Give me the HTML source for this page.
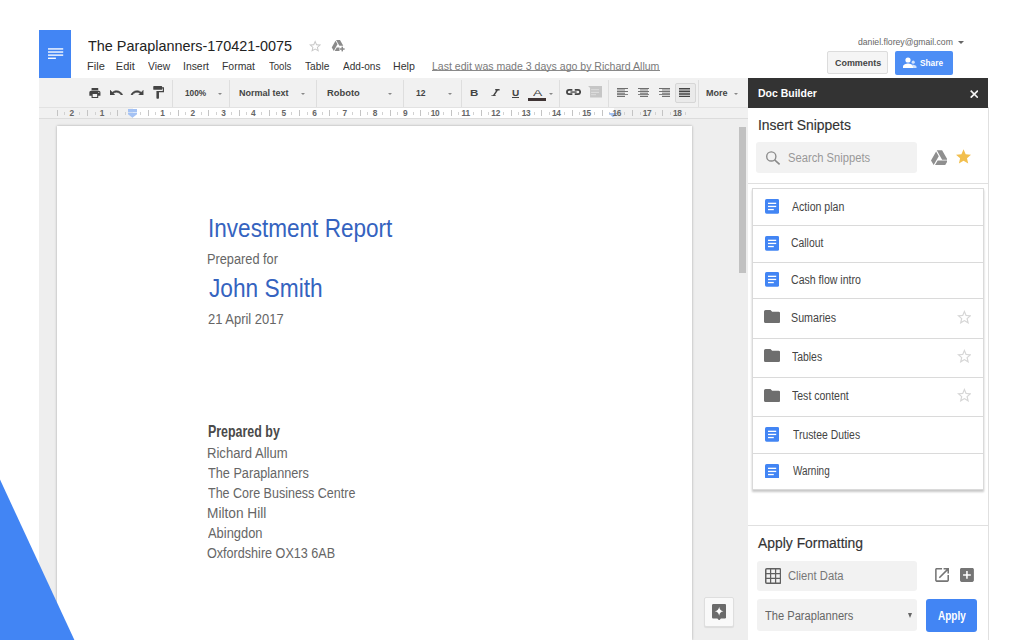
<!DOCTYPE html>
<html><head><meta charset="utf-8">
<style>
*{margin:0;padding:0;box-sizing:border-box}
html,body{width:1024px;height:640px;overflow:hidden;background:#fff;font-family:"Liberation Sans",sans-serif}
body{position:relative}
.a{position:absolute;display:block}
.t{position:absolute;white-space:nowrap;line-height:normal;transform-origin:0 0}
</style></head><body>

<div class="a" style="left:39px;top:30px;width:32px;height:48px;background:#4285f4"></div>
<svg class="a" style="left:39px;top:30px;" width="32" height="48" viewBox="0 0 32 48"><rect x="9" y="18.25" width="15.2" height="1.35" fill="#fff"/><rect x="9" y="21.35" width="15.2" height="1.35" fill="#fff"/><rect x="9" y="24.45" width="15.2" height="1.35" fill="#fff"/><rect x="9" y="27.6" width="7.9" height="1.35" fill="#fff"/></svg>
<svg class="a" style="left:309px;top:40px;" width="12.3" height="12" viewBox="2 2 20 19"><path d="M22 9.24l-7.19-.62L12 2 9.19 8.63 2 9.24l5.46 4.73L5.82 21 12 17.27 18.18 21l-1.63-7.03L22 9.24zM12 15.4l-3.76 2.27 1-4.28-3.32-2.88 4.38-.38L12 6.1l1.71 4.04 4.38.38-3.32 2.88 1 4.28L12 15.4z" fill="#c8c8c8"/></svg>
<svg class="a" style="left:331px;top:40px;" width="14" height="11.5" viewBox="0 0 24 20"><path d="M7.71,1.5L1.15,13L4.58,19L11.13,7.5Z" fill="#8a8a8a"/><path d="M8.58,0H15.42L21.2,10.2H14.4Z" fill="#8a8a8a"/><path d="M9.73,13L6.3,19H14.6V13Z" fill="#8a8a8a"/><rect x="18.1" y="11.6" width="2.6" height="8.2" fill="#8a8a8a"/><rect x="15.3" y="14.4" width="8.2" height="2.6" fill="#8a8a8a"/></svg>
<div class="a" style="left:432px;top:69.6px;width:227.5px;height:1px;background:#8a8a8a"></div>
<div class="a" style="left:957.5px;top:41px;width:0;height:0;border-left:3px solid transparent;border-right:3px solid transparent;border-top:3px solid #666"></div>
<div class="a" style="left:827px;top:51px;width:61px;height:23px;background:#f5f5f5;border:1px solid #dcdcdc;border-radius:2px"></div>
<div class="a" style="left:895px;top:51px;width:58px;height:23.5px;background:#4d8ef5;border-radius:2px"></div>
<svg class="a" style="left:902.5px;top:56.5px;" width="14" height="11" viewBox="0 0 14 11"><circle cx="5" cy="3" r="2.6" fill="#fff"/><path d="M0 11v-1.6C0 7.5 3.2 6.4 5 6.4s5 1.1 5 3V11z" fill="#fff"/><circle cx="10.2" cy="5.2" r="1.6" fill="#fff" opacity=".75"/><path d="M10 11v-1.6c0-.9-.4-1.5-1-2 1.9.1 4.5.9 4.5 2.3V11z" fill="#fff" opacity=".75"/></svg>
<div class="a" style="left:39px;top:78px;width:709px;height:29px;background:#f1f1f1"></div>
<div class="a" style="left:39px;top:107px;width:709px;height:1px;background:#e2e2e2"></div>
<div class="a" style="left:172px;top:80px;width:1px;height:27px;background:#dedede"></div>
<div class="a" style="left:229px;top:80px;width:1px;height:27px;background:#dedede"></div>
<div class="a" style="left:316px;top:80px;width:1px;height:27px;background:#dedede"></div>
<div class="a" style="left:403px;top:80px;width:1px;height:27px;background:#dedede"></div>
<div class="a" style="left:460.5px;top:80px;width:1px;height:27px;background:#dedede"></div>
<div class="a" style="left:559px;top:80px;width:1px;height:27px;background:#dedede"></div>
<div class="a" style="left:608px;top:80px;width:1px;height:27px;background:#dedede"></div>
<div class="a" style="left:698px;top:80px;width:1px;height:27px;background:#dedede"></div>
<svg class="a" style="left:89.3px;top:87.7px;" width="11.8" height="10" viewBox="2 3 20 18"><path d="M19 8H5c-1.66 0-3 1.34-3 3v6h4v4h12v-4h4v-6c0-1.66-1.34-3-3-3zm-3 11H8v-5h8v5zm3-7c-.55 0-1-.45-1-1s.45-1 1-1 1 .45 1 1-.45 1-1 1zm-1-9H6v4h12V3z" fill="#444"/></svg>
<svg class="a" style="left:110.2px;top:89.5px;" width="12.5" height="5.8" viewBox="2 7 20.1 9"><path d="M12.5 8c-2.65 0-5.05.99-6.9 2.6L2 7v9h9l-3.62-3.62c1.39-1.16 3.16-1.88 5.12-1.88 3.54 0 6.55 2.31 7.6 5.5l2.37-.78C21.08 11.03 17.15 8 12.5 8z" fill="#444" stroke="#444" stroke-width="0.9"/></svg>
<svg class="a" style="left:131px;top:89.5px;transform:scaleX(-1)" width="12.5" height="5.8" viewBox="2 7 20.1 9"><path d="M12.5 8c-2.65 0-5.05.99-6.9 2.6L2 7v9h9l-3.62-3.62c1.39-1.16 3.16-1.88 5.12-1.88 3.54 0 6.55 2.31 7.6 5.5l2.37-.78C21.08 11.03 17.15 8 12.5 8z" fill="#444" stroke="#444" stroke-width="0.9"/></svg>
<svg class="a" style="left:152.8px;top:86.2px;" width="11.3" height="12.7" viewBox="4 2 17 20"><path d="M18 4V3c0-.55-.45-1-1-1H5c-.55 0-1 .45-1 1v4c0 .55.45 1 1 1h12c.55 0 1-.45 1-1V6h1v4H9v11c0 .55.45 1 1 1h2c.55 0 1-.45 1-1v-9h8V4h-3z" fill="#444"/></svg>
<div class="a" style="left:217.6px;top:92.5px;width:0;height:0;border-left:2.2px solid transparent;border-right:2.2px solid transparent;border-top:2.5px solid #888"></div>
<div class="a" style="left:300.8px;top:92.5px;width:0;height:0;border-left:2.2px solid transparent;border-right:2.2px solid transparent;border-top:2.5px solid #888"></div>
<div class="a" style="left:387.6px;top:92.5px;width:0;height:0;border-left:2.2px solid transparent;border-right:2.2px solid transparent;border-top:2.5px solid #888"></div>
<div class="a" style="left:448.4px;top:92.5px;width:0;height:0;border-left:2.2px solid transparent;border-right:2.2px solid transparent;border-top:2.5px solid #888"></div>
<div class="a" style="left:548.7px;top:92.5px;width:0;height:0;border-left:2.2px solid transparent;border-right:2.2px solid transparent;border-top:2.5px solid #888"></div>
<div class="a" style="left:734px;top:92.5px;width:0;height:0;border-left:2.2px solid transparent;border-right:2.2px solid transparent;border-top:2.5px solid #888"></div>
<svg class="a" style="left:490.5px;top:88.6px;" width="9" height="7.6" viewBox="0 0 9 7.6"><path d="M4.2 0.7H8.6M0.4 6.9H4.8M6.6 0.7L2.4 6.9" stroke="#444" stroke-width="1.5" fill="none"/></svg>
<div class="a" style="left:512px;top:97px;width:7.4px;height:0.9px;background:#444"></div>
<div class="a" style="left:528px;top:98.3px;width:17.5px;height:3px;background:#3f3434"></div>
<svg class="a" style="left:566.1px;top:89.3px;" width="15.1" height="6" viewBox="0 0 15 6"><path d="M6.3 0.9H3A2.1 2.1 0 0 0 3 5.1H6.3M8.7 0.9H12A2.1 2.1 0 0 1 12 5.1H8.7" stroke="#444" stroke-width="1.8" fill="none"/><rect x="4.4" y="2.4" width="6.2" height="1.3" fill="#444"/></svg>
<svg class="a" style="left:587.6px;top:86.2px;" width="14.1" height="11.4" viewBox="0 0 14 11.4"><path d="M0 0H14V11.4H2V2z" fill="#c6c6c6"/><rect x="3" y="3" width="8" height="1.2" fill="#d8d8d8"/><rect x="3" y="5.8" width="8" height="1.2" fill="#dcdcdc"/><rect x="3" y="8" width="5" height="1.2" fill="#d8d8d8"/></svg>
<div class="a" style="left:674.5px;top:82.5px;width:21px;height:20.2px;background:#eaeaea;border:1px solid #d6d6d6;border-radius:2px"></div>
<div class="a" style="left:617px;top:88px;width:11px;height:1px;background:#6e6e6e"></div><div class="a" style="left:617px;top:89px;width:8px;height:1px;background:#b2b2b2"></div><div class="a" style="left:617px;top:90px;width:8px;height:1px;background:#bdbdbd"></div><div class="a" style="left:617px;top:91px;width:11px;height:1px;background:#747474"></div><div class="a" style="left:617px;top:92px;width:8px;height:1px;background:#c8c8c8"></div><div class="a" style="left:617px;top:93px;width:8px;height:1px;background:#8f8f8f"></div><div class="a" style="left:617px;top:94px;width:11px;height:1px;background:#858585"></div><div class="a" style="left:617px;top:95px;width:8px;height:1px;background:#d2d2d2"></div><div class="a" style="left:617px;top:96px;width:8px;height:1px;background:#707070"></div>
<div class="a" style="left:638px;top:88px;width:11px;height:1px;background:#6e6e6e"></div><div class="a" style="left:639.5px;top:89px;width:8px;height:1px;background:#b2b2b2"></div><div class="a" style="left:639.5px;top:90px;width:8px;height:1px;background:#bdbdbd"></div><div class="a" style="left:638px;top:91px;width:11px;height:1px;background:#747474"></div><div class="a" style="left:639.5px;top:92px;width:8px;height:1px;background:#c8c8c8"></div><div class="a" style="left:639.5px;top:93px;width:8px;height:1px;background:#8f8f8f"></div><div class="a" style="left:638px;top:94px;width:11px;height:1px;background:#858585"></div><div class="a" style="left:639.5px;top:95px;width:8px;height:1px;background:#d2d2d2"></div><div class="a" style="left:639.5px;top:96px;width:8px;height:1px;background:#707070"></div>
<div class="a" style="left:659px;top:88px;width:11px;height:1px;background:#6e6e6e"></div><div class="a" style="left:662px;top:89px;width:8px;height:1px;background:#b2b2b2"></div><div class="a" style="left:662px;top:90px;width:8px;height:1px;background:#bdbdbd"></div><div class="a" style="left:659px;top:91px;width:11px;height:1px;background:#747474"></div><div class="a" style="left:662px;top:92px;width:8px;height:1px;background:#c8c8c8"></div><div class="a" style="left:662px;top:93px;width:8px;height:1px;background:#8f8f8f"></div><div class="a" style="left:659px;top:94px;width:11px;height:1px;background:#858585"></div><div class="a" style="left:662px;top:95px;width:8px;height:1px;background:#d2d2d2"></div><div class="a" style="left:662px;top:96px;width:8px;height:1px;background:#707070"></div>
<div class="a" style="left:679.2px;top:88px;width:11px;height:1px;background:#444"></div><div class="a" style="left:679.2px;top:89px;width:11px;height:1px;background:#9a9a9a"></div><div class="a" style="left:679.2px;top:90px;width:11px;height:1px;background:#9a9a9a"></div><div class="a" style="left:679.2px;top:91px;width:11px;height:1px;background:#444"></div><div class="a" style="left:679.2px;top:92px;width:11px;height:1px;background:#bbb"></div><div class="a" style="left:679.2px;top:93px;width:11px;height:1px;background:#6a6a6a"></div><div class="a" style="left:679.2px;top:94px;width:11px;height:1px;background:#6a6a6a"></div><div class="a" style="left:679.2px;top:95px;width:11px;height:1px;background:#c0c0c0"></div><div class="a" style="left:679.2px;top:96px;width:11px;height:1px;background:#444"></div>
<div class="a" style="left:39px;top:108px;width:709px;height:10px;background:#f1f1f1"></div>
<div class="a" style="left:132.5px;top:108px;width:481px;height:10px;background:#fff"></div>
<div class="a" style="left:39px;top:118px;width:709px;height:1px;background:#dcdcdc"></div>
<div class="a" style="left:56.86px;top:110.2px;width:1px;height:5.6px;background:#c4c4c4"></div><div class="a" style="left:64.26px;top:112.2px;width:1px;height:2.4px;background:#d2d2d2"></div><div class="a" style="left:79.44px;top:112.2px;width:1px;height:2.4px;background:#d2d2d2"></div><div class="a" style="left:87.14px;top:110.2px;width:1px;height:5.6px;background:#c4c4c4"></div><div class="a" style="left:94.54px;top:112.2px;width:1px;height:2.4px;background:#d2d2d2"></div><div class="a" style="left:109.72px;top:112.2px;width:1px;height:2.4px;background:#d2d2d2"></div><div class="a" style="left:117.42px;top:110.2px;width:1px;height:5.6px;background:#c4c4c4"></div><div class="a" style="left:124.82px;top:112.2px;width:1px;height:2.4px;background:#d2d2d2"></div><div class="a" style="left:140.00px;top:112.2px;width:1px;height:2.4px;background:#d2d2d2"></div><div class="a" style="left:147.70px;top:110.2px;width:1px;height:5.6px;background:#c4c4c4"></div><div class="a" style="left:155.10px;top:112.2px;width:1px;height:2.4px;background:#d2d2d2"></div><div class="a" style="left:170.28px;top:112.2px;width:1px;height:2.4px;background:#d2d2d2"></div><div class="a" style="left:177.98px;top:110.2px;width:1px;height:5.6px;background:#c4c4c4"></div><div class="a" style="left:185.38px;top:112.2px;width:1px;height:2.4px;background:#d2d2d2"></div><div class="a" style="left:200.56px;top:112.2px;width:1px;height:2.4px;background:#d2d2d2"></div><div class="a" style="left:208.26px;top:110.2px;width:1px;height:5.6px;background:#c4c4c4"></div><div class="a" style="left:215.66px;top:112.2px;width:1px;height:2.4px;background:#d2d2d2"></div><div class="a" style="left:230.84px;top:112.2px;width:1px;height:2.4px;background:#d2d2d2"></div><div class="a" style="left:238.54px;top:110.2px;width:1px;height:5.6px;background:#c4c4c4"></div><div class="a" style="left:245.94px;top:112.2px;width:1px;height:2.4px;background:#d2d2d2"></div><div class="a" style="left:261.12px;top:112.2px;width:1px;height:2.4px;background:#d2d2d2"></div><div class="a" style="left:268.82px;top:110.2px;width:1px;height:5.6px;background:#c4c4c4"></div><div class="a" style="left:276.22px;top:112.2px;width:1px;height:2.4px;background:#d2d2d2"></div><div class="a" style="left:291.40px;top:112.2px;width:1px;height:2.4px;background:#d2d2d2"></div><div class="a" style="left:299.10px;top:110.2px;width:1px;height:5.6px;background:#c4c4c4"></div><div class="a" style="left:306.50px;top:112.2px;width:1px;height:2.4px;background:#d2d2d2"></div><div class="a" style="left:321.68px;top:112.2px;width:1px;height:2.4px;background:#d2d2d2"></div><div class="a" style="left:329.38px;top:110.2px;width:1px;height:5.6px;background:#c4c4c4"></div><div class="a" style="left:336.78px;top:112.2px;width:1px;height:2.4px;background:#d2d2d2"></div><div class="a" style="left:351.96px;top:112.2px;width:1px;height:2.4px;background:#d2d2d2"></div><div class="a" style="left:359.66px;top:110.2px;width:1px;height:5.6px;background:#c4c4c4"></div><div class="a" style="left:367.06px;top:112.2px;width:1px;height:2.4px;background:#d2d2d2"></div><div class="a" style="left:382.24px;top:112.2px;width:1px;height:2.4px;background:#d2d2d2"></div><div class="a" style="left:389.94px;top:110.2px;width:1px;height:5.6px;background:#c4c4c4"></div><div class="a" style="left:397.34px;top:112.2px;width:1px;height:2.4px;background:#d2d2d2"></div><div class="a" style="left:412.52px;top:112.2px;width:1px;height:2.4px;background:#d2d2d2"></div><div class="a" style="left:420.22px;top:110.2px;width:1px;height:5.6px;background:#c4c4c4"></div><div class="a" style="left:427.62px;top:112.2px;width:1px;height:2.4px;background:#d2d2d2"></div><div class="a" style="left:442.80px;top:112.2px;width:1px;height:2.4px;background:#d2d2d2"></div><div class="a" style="left:450.50px;top:110.2px;width:1px;height:5.6px;background:#c4c4c4"></div><div class="a" style="left:457.90px;top:112.2px;width:1px;height:2.4px;background:#d2d2d2"></div><div class="a" style="left:473.08px;top:112.2px;width:1px;height:2.4px;background:#d2d2d2"></div><div class="a" style="left:480.78px;top:110.2px;width:1px;height:5.6px;background:#c4c4c4"></div><div class="a" style="left:488.18px;top:112.2px;width:1px;height:2.4px;background:#d2d2d2"></div><div class="a" style="left:503.36px;top:112.2px;width:1px;height:2.4px;background:#d2d2d2"></div><div class="a" style="left:511.06px;top:110.2px;width:1px;height:5.6px;background:#c4c4c4"></div><div class="a" style="left:518.46px;top:112.2px;width:1px;height:2.4px;background:#d2d2d2"></div><div class="a" style="left:533.64px;top:112.2px;width:1px;height:2.4px;background:#d2d2d2"></div><div class="a" style="left:541.34px;top:110.2px;width:1px;height:5.6px;background:#c4c4c4"></div><div class="a" style="left:548.74px;top:112.2px;width:1px;height:2.4px;background:#d2d2d2"></div><div class="a" style="left:563.92px;top:112.2px;width:1px;height:2.4px;background:#d2d2d2"></div><div class="a" style="left:571.62px;top:110.2px;width:1px;height:5.6px;background:#c4c4c4"></div><div class="a" style="left:579.02px;top:112.2px;width:1px;height:2.4px;background:#d2d2d2"></div><div class="a" style="left:594.20px;top:112.2px;width:1px;height:2.4px;background:#d2d2d2"></div><div class="a" style="left:601.90px;top:110.2px;width:1px;height:5.6px;background:#c4c4c4"></div><div class="a" style="left:609.30px;top:112.2px;width:1px;height:2.4px;background:#d2d2d2"></div><div class="a" style="left:624.48px;top:112.2px;width:1px;height:2.4px;background:#d2d2d2"></div><div class="a" style="left:632.18px;top:110.2px;width:1px;height:5.6px;background:#c4c4c4"></div><div class="a" style="left:639.58px;top:112.2px;width:1px;height:2.4px;background:#d2d2d2"></div><div class="a" style="left:654.76px;top:112.2px;width:1px;height:2.4px;background:#d2d2d2"></div><div class="a" style="left:662.46px;top:110.2px;width:1px;height:5.6px;background:#c4c4c4"></div><div class="a" style="left:669.86px;top:112.2px;width:1px;height:2.4px;background:#d2d2d2"></div><div class="a" style="left:685.04px;top:112.2px;width:1px;height:2.4px;background:#d2d2d2"></div>
<svg class="a" style="left:128px;top:109.4px;" width="9" height="9" viewBox="0 0 9 9"><rect x="0" y="0" width="9" height="3.4" fill="#a4c2f4"/><path d="M0 4.1H9V5.2L4.5 8.7L0 5.2z" fill="#a4c2f4"/></svg>
<svg class="a" style="left:608.9px;top:113.4px;" width="8" height="4.6" viewBox="0 0 8 4.6"><path d="M0 0H8V0.6L4 4.6L0 0.6z" fill="#a4c2f4"/></svg>
<div class="a" style="left:39px;top:119px;width:709px;height:521px;background:#eeeeee"></div>
<div class="a" style="left:57px;top:126px;width:635px;height:514px;background:#fff;box-shadow:0 0 2.5px rgba(0,0,0,.3)"></div>
<div class="a" style="left:739px;top:127px;width:7px;height:146px;background:#c1c1c1"></div>
<div class="a" style="left:704px;top:597px;width:30px;height:29.5px;background:#f9f9f9;border:1px solid #dedede;border-radius:2px;box-shadow:0 1px 1px rgba(0,0,0,.08)"></div>
<svg class="a" style="left:711.9px;top:603.9px;" width="14.3" height="16.5" viewBox="0 0 14.3 16.5"><path d="M1.3 0H13C13.7 0 14.3.6 14.3 1.3V13.3C14.3 14 13.7 14.6 13 14.6H8.9L7.15 16.4L5.4 14.6H1.3C.6 14.6 0 14 0 13.3V1.3C0 .6.6 0 1.3 0z" fill="#6b6b6b"/><path d="M7.15 2.8C7.6 5.6 8.6 6.8 11.5 7.3C8.6 7.8 7.6 9 7.15 11.8C6.7 9 5.7 7.8 2.8 7.3C5.7 6.8 6.7 5.6 7.15 2.8z" fill="#fff"/></svg>
<div class="a" style="left:748px;top:78px;width:240px;height:562px;background:#fff"></div>
<div class="a" style="left:987.5px;top:107px;width:1px;height:533px;background:#e0e0e0"></div>
<div class="a" style="left:748px;top:78px;width:240px;height:30px;background:#333"></div>
<svg class="a" style="left:969.5px;top:89.5px;" width="8.6" height="8.4" viewBox="0 0 8.6 8.4"><path d="M0.7 0.7L7.9 7.7M7.9 0.7L0.7 7.7" stroke="#f4f4f4" stroke-width="1.65"/></svg>
<div class="a" style="left:756px;top:142px;width:161.3px;height:31.4px;background:#f2f2f2;border-radius:3px"></div>
<svg class="a" style="left:765px;top:150px;" width="16" height="16" viewBox="0 0 16 16"><circle cx="6.3" cy="6.4" r="4.6" fill="none" stroke="#8a8a8a" stroke-width="1.35"/><path d="M9.6 9.8L14.6 14.3" stroke="#8a8a8a" stroke-width="1.6"/></svg>
<svg class="a" style="left:930.6px;top:150.2px;" width="16.9" height="15.4" viewBox="1.15 2 21.7 19"><path d="M7.71,3.5L1.15,15L4.58,21L11.13,9.5M9.73,15L6.3,21H19.42L22.85,15M22.28,14L15.42,2H8.58L8.57,2L15.43,14H22.28Z" fill="#8f8f8f"/></svg>
<svg class="a" style="left:956.1px;top:149px;" width="15.1" height="14.8" viewBox="2 2 20 19"><path d="M12 17.27L18.18 21l-1.64-7.03L22 9.24l-7.19-.61L12 2 9.19 8.63 2 9.24l5.46 4.73L5.82 21z" fill="#f2bf4e"/></svg>
<div class="a" style="left:748px;top:183px;width:240px;height:1px;background:#e0e0e0"></div>
<div class="a" style="left:752px;top:188px;width:231.6px;height:302px;background:#fff;border:1px solid #dadada;box-shadow:0 1.5px 2px rgba(0,0,0,.22)"></div>
<div class="a" style="left:752px;top:224.5px;width:231.6px;height:1px;background:#dadada"></div>
<div class="a" style="left:752px;top:261.5px;width:231.6px;height:1px;background:#dadada"></div>
<div class="a" style="left:752px;top:297.8px;width:231.6px;height:1px;background:#dadada"></div>
<div class="a" style="left:752px;top:337.5px;width:231.6px;height:1px;background:#dadada"></div>
<div class="a" style="left:752px;top:376.5px;width:231.6px;height:1px;background:#dadada"></div>
<div class="a" style="left:752px;top:415.5px;width:231.6px;height:1px;background:#dadada"></div>
<div class="a" style="left:752px;top:452.8px;width:231.6px;height:1px;background:#dadada"></div>
<svg class="a" style="left:765px;top:199.0px;" width="14.2" height="14.7" viewBox="0 0 14.2 14.7"><rect x="0" y="0" width="14.2" height="14.7" rx="1.6" fill="#4285f4"/><rect x="3" y="3.7" width="8.2" height="1.3" fill="#fff"/><rect x="3" y="6.8" width="8.2" height="1.3" fill="#fff"/><rect x="3" y="9.9" width="5.8" height="1.3" fill="#fff"/></svg>
<svg class="a" style="left:765px;top:235.85px;" width="14.2" height="14.7" viewBox="0 0 14.2 14.7"><rect x="0" y="0" width="14.2" height="14.7" rx="1.6" fill="#4285f4"/><rect x="3" y="3.7" width="8.2" height="1.3" fill="#fff"/><rect x="3" y="6.8" width="8.2" height="1.3" fill="#fff"/><rect x="3" y="9.9" width="5.8" height="1.3" fill="#fff"/></svg>
<svg class="a" style="left:765px;top:272.25px;" width="14.2" height="14.7" viewBox="0 0 14.2 14.7"><rect x="0" y="0" width="14.2" height="14.7" rx="1.6" fill="#4285f4"/><rect x="3" y="3.7" width="8.2" height="1.3" fill="#fff"/><rect x="3" y="6.8" width="8.2" height="1.3" fill="#fff"/><rect x="3" y="9.9" width="5.8" height="1.3" fill="#fff"/></svg>
<svg class="a" style="left:765px;top:426.84999999999997px;" width="14.2" height="14.7" viewBox="0 0 14.2 14.7"><rect x="0" y="0" width="14.2" height="14.7" rx="1.6" fill="#4285f4"/><rect x="3" y="3.7" width="8.2" height="1.3" fill="#fff"/><rect x="3" y="6.8" width="8.2" height="1.3" fill="#fff"/><rect x="3" y="9.9" width="5.8" height="1.3" fill="#fff"/></svg>
<svg class="a" style="left:765px;top:463.79999999999995px;" width="14.2" height="14.7" viewBox="0 0 14.2 14.7"><rect x="0" y="0" width="14.2" height="14.7" rx="1.6" fill="#4285f4"/><rect x="3" y="3.7" width="8.2" height="1.3" fill="#fff"/><rect x="3" y="6.8" width="8.2" height="1.3" fill="#fff"/><rect x="3" y="9.9" width="5.8" height="1.3" fill="#fff"/></svg>
<svg class="a" style="left:764px;top:310.0px;" width="16.25" height="13.2" viewBox="2 4 20 16"><path d="M10 4H4c-1.1 0-1.99.9-1.99 2L2 18c0 1.1.9 2 2 2h16c1.1 0 2-.9 2-2V8c0-1.1-.9-2-2-2h-8l-2-2z" fill="#6e6e6e"/></svg>
<svg class="a" style="left:956.7px;top:309.5px;" width="14.8" height="14.1" viewBox="2 2 20 19"><path d="M22 9.24l-7.19-.62L12 2 9.19 8.63 2 9.24l5.46 4.73L5.82 21 12 17.27 18.18 21l-1.63-7.03L22 9.24zM12 15.4l-3.76 2.27 1-4.28-3.32-2.88 4.38-.38L12 6.1l1.71 4.04 4.38.38-3.32 2.88 1 4.28L12 15.4z" fill="#d6d6d6"/></svg>
<svg class="a" style="left:764px;top:349.4px;" width="16.25" height="13.2" viewBox="2 4 20 16"><path d="M10 4H4c-1.1 0-1.99.9-1.99 2L2 18c0 1.1.9 2 2 2h16c1.1 0 2-.9 2-2V8c0-1.1-.9-2-2-2h-8l-2-2z" fill="#6e6e6e"/></svg>
<svg class="a" style="left:956.7px;top:348.9px;" width="14.8" height="14.1" viewBox="2 2 20 19"><path d="M22 9.24l-7.19-.62L12 2 9.19 8.63 2 9.24l5.46 4.73L5.82 21 12 17.27 18.18 21l-1.63-7.03L22 9.24zM12 15.4l-3.76 2.27 1-4.28-3.32-2.88 4.38-.38L12 6.1l1.71 4.04 4.38.38-3.32 2.88 1 4.28L12 15.4z" fill="#d6d6d6"/></svg>
<svg class="a" style="left:764px;top:388.59999999999997px;" width="16.25" height="13.2" viewBox="2 4 20 16"><path d="M10 4H4c-1.1 0-1.99.9-1.99 2L2 18c0 1.1.9 2 2 2h16c1.1 0 2-.9 2-2V8c0-1.1-.9-2-2-2h-8l-2-2z" fill="#6e6e6e"/></svg>
<svg class="a" style="left:956.7px;top:388.09999999999997px;" width="14.8" height="14.1" viewBox="2 2 20 19"><path d="M22 9.24l-7.19-.62L12 2 9.19 8.63 2 9.24l5.46 4.73L5.82 21 12 17.27 18.18 21l-1.63-7.03L22 9.24zM12 15.4l-3.76 2.27 1-4.28-3.32-2.88 4.38-.38L12 6.1l1.71 4.04 4.38.38-3.32 2.88 1 4.28L12 15.4z" fill="#d6d6d6"/></svg>
<div class="a" style="left:748px;top:525px;width:240px;height:1px;background:#e0e0e0"></div>
<div class="a" style="left:757.2px;top:561.2px;width:160.3px;height:30px;background:#f2f2f2;border-radius:3px"></div>
<svg class="a" style="left:765px;top:568px;" width="16.3" height="16" viewBox="0 0 16.3 16"><rect x="0.75" y="0.75" width="14.8" height="14.5" rx="1" fill="none" stroke="#606060" stroke-width="1.5"/><path d="M5.6 0.8V15.2M10.6 0.8V15.2M0.8 5.5H15.5M0.8 10.5H15.5" stroke="#606060" stroke-width="1.25"/></svg>
<svg class="a" style="left:935.4px;top:568.1px;" width="14.1" height="13.9" viewBox="3 3 18 18"><path d="M19 19H5V5h7V3H5c-1.11 0-2 .9-2 2v14c0 1.1.89 2 2 2h14c1.1 0 2-.9 2-2v-7h-2v7zM14 3v2h3.59l-9.83 9.83 1.41 1.41L19 6.41V10h2V3h-7z" fill="#757575"/></svg>
<svg class="a" style="left:960.3px;top:568.1px;" width="13.9" height="13.9" viewBox="3 3 18 18"><path d="M19 3H5c-1.11 0-2 .9-2 2v14c0 1.1.89 2 2 2h14c1.1 0 2-.9 2-2V5c0-1.1-.9-2-2-2zm-2 10h-4v4h-2v-4H7v-2h4V7h2v4h4v2z" fill="#757575"/></svg>
<div class="a" style="left:757.2px;top:599px;width:160.3px;height:32.3px;background:#f2f2f2;border-radius:3px"></div>
<div class="a" style="left:908px;top:612.6px;width:0;height:0;border-left:2.6px solid transparent;border-right:2.6px solid transparent;border-top:5px solid #666"></div>
<div class="a" style="left:926px;top:599px;width:50.8px;height:32.7px;background:#4285f4;border-radius:3px"></div>
<div class="t" style="left:87.5px;top:37px;font-size:15px;color:#222;transform:scaleX(0.9599)">The Paraplanners-170421-0075</div>
<div class="t" style="left:86.89px;top:60px;font-size:11px;color:#333;transform:scaleX(1.0062)">File</div>
<div class="t" style="left:115.8px;top:60px;font-size:11px;color:#333;transform:scaleX(1.0)">Edit</div>
<div class="t" style="left:148.0px;top:60px;font-size:11px;color:#333;transform:scaleX(0.9333)">View</div>
<div class="t" style="left:182.56px;top:60px;font-size:11px;color:#333;transform:scaleX(0.9444)">Insert</div>
<div class="t" style="left:221.65px;top:60px;font-size:11px;color:#333;transform:scaleX(0.9471)">Format</div>
<div class="t" style="left:268.8px;top:60px;font-size:11px;color:#333;transform:scaleX(0.8692)">Tools</div>
<div class="t" style="left:305.3px;top:60px;font-size:11px;color:#333;transform:scaleX(0.9269)">Table</div>
<div class="t" style="left:342.5px;top:60px;font-size:11px;color:#333;transform:scaleX(0.9146)">Add-ons</div>
<div class="t" style="left:393.03px;top:60px;font-size:11px;color:#333;transform:scaleX(0.9667)">Help</div>
<div class="t" style="left:431.84px;top:60px;font-size:11px;color:#7a7a7a;transform:scaleX(0.9585)">Last edit was made 3 days ago by Richard Allum</div>
<div class="t" style="left:858.4px;top:37px;font-size:9px;color:#666;transform:scaleX(0.9612)">daniel.florey@gmail.com</div>
<div class="t" style="left:834.6px;top:58px;font-size:9px;font-weight:bold;color:#444;transform:scaleX(0.9935)">Comments</div>
<div class="t" style="left:920.0px;top:58px;font-size:9px;font-weight:bold;color:#fff;transform:scaleX(0.92)">Share</div>
<div class="t" style="left:185.4px;top:88px;font-size:9px;font-weight:bold;color:#444;transform:scaleX(0.9217)">100%</div>
<div class="t" style="left:239.3px;top:88px;font-size:9px;font-weight:bold;color:#444;transform:scaleX(1.0021)">Normal text</div>
<div class="t" style="left:326.56px;top:88px;font-size:9px;font-weight:bold;color:#444;transform:scaleX(1.04)">Roboto</div>
<div class="t" style="left:416.2px;top:88px;font-size:9px;font-weight:bold;color:#444;transform:scaleX(0.95)">12</div>
<div class="t" style="left:705.6px;top:88px;font-size:9px;font-weight:bold;color:#444;transform:scaleX(1.005)">More</div>
<div class="t" style="left:469.58px;top:87px;font-size:9.5px;font-weight:bold;color:#444;transform:scaleX(1.2167)">B</div>
<div class="t" style="left:512.0px;top:87px;font-size:9.5px;font-weight:bold;color:#444;transform:scaleX(1.0571)">U</div>
<div class="t" style="left:532.6px;top:87px;font-size:9.5px;color:#444;transform:scaleX(1.4667)">A</div>
<div class="t" style="left:757.65px;top:87px;font-size:11px;font-weight:bold;color:#fff;transform:scaleX(0.9533)">Doc Builder</div>
<div class="t" style="left:757.89px;top:118.3px;font-size:13.8px;-webkit-text-stroke:0.15px #333;color:#333;transform:scaleX(1.0088)">Insert Snippets</div>
<div class="t" style="left:787.67px;top:151px;font-size:12px;color:#999;transform:scaleX(0.9322)">Search Snippets</div>
<div class="t" style="left:792.0px;top:199.6px;font-size:12.5px;color:#444;transform:scaleX(0.8459)">Action plan</div>
<div class="t" style="left:791.17px;top:236.2px;font-size:12.5px;color:#444;transform:scaleX(0.8316)">Callout</div>
<div class="t" style="left:791.15px;top:272.8px;font-size:12.5px;color:#444;transform:scaleX(0.8457)">Cash flow intro</div>
<div class="t" style="left:791.15px;top:311px;font-size:12.5px;color:#444;transform:scaleX(0.8549)">Sumaries</div>
<div class="t" style="left:792.0px;top:350.2px;font-size:12.5px;color:#444;transform:scaleX(0.8333)">Tables</div>
<div class="t" style="left:792.0px;top:389.2px;font-size:12.5px;color:#444;transform:scaleX(0.8419)">Test content</div>
<div class="t" style="left:792.7px;top:428px;font-size:12.5px;color:#444;transform:scaleX(0.83)">Trustee Duties</div>
<div class="t" style="left:792.7px;top:464.2px;font-size:12.5px;color:#444;transform:scaleX(0.7957)">Warning</div>
<div class="t" style="left:758.0px;top:535.3px;font-size:14px;-webkit-text-stroke:0.15px #333;color:#333;transform:scaleX(0.9929)">Apply Formatting</div>
<div class="t" style="left:788.31px;top:569.3px;font-size:12px;color:#777;transform:scaleX(0.9353)">Client Data</div>
<div class="t" style="left:765.0px;top:608.5px;font-size:12.5px;color:#666;transform:scaleX(0.8889)">The Paraplanners</div>
<div class="t" style="left:937.5px;top:609.3px;font-size:12px;font-weight:bold;color:#fff;transform:scaleX(0.8333)">Apply</div>
<div class="t" style="left:207.58px;top:212.8px;font-size:26.2px;color:#3563bf;transform:scaleX(0.8618)">Investment Report</div>
<div class="t" style="left:207.19px;top:251px;font-size:14px;color:#666;transform:scaleX(0.9117)">Prepared for</div>
<div class="t" style="left:208.53px;top:272.8px;font-size:26.2px;color:#3563bf;transform:scaleX(0.8674)">John Smith</div>
<div class="t" style="left:207.97px;top:311.2px;font-size:14px;color:#666;transform:scaleX(0.9262)">21 April 2017</div>
<div class="t" style="left:208.13px;top:421.9px;font-size:16.2px;font-weight:bold;color:#4a4a4a;transform:scaleX(0.7674)">Prepared by</div>
<div class="t" style="left:207.17px;top:444.9px;font-size:14px;color:#666;transform:scaleX(0.9341)">Richard Allum</div>
<div class="t" style="left:208.1px;top:464.9px;font-size:14px;color:#666;transform:scaleX(0.9068)">The Paraplanners</div>
<div class="t" style="left:208.1px;top:484.9px;font-size:14px;color:#666;transform:scaleX(0.8933)">The Core Business Centre</div>
<div class="t" style="left:207.12px;top:504.9px;font-size:14px;color:#666;transform:scaleX(0.9771)">Milton Hill</div>
<div class="t" style="left:208.1px;top:524.9px;font-size:14px;color:#666;transform:scaleX(0.922)">Abingdon</div>
<div class="t" style="left:207.2px;top:544.9px;font-size:14px;color:#666;transform:scaleX(0.9)">Oxfordshire OX13 6AB</div>
<div class="t" style="left:69.44px;top:108px;font-size:8.3px;font-weight:bold;letter-spacing:-0.3px;color:#666;transform:scaleX(1.0)">2</div>
<div class="t" style="left:99.72px;top:108px;font-size:8.3px;font-weight:bold;letter-spacing:-0.3px;color:#666;transform:scaleX(1.0)">1</div>
<div class="t" style="left:160.28px;top:108px;font-size:8.3px;font-weight:bold;letter-spacing:-0.3px;color:#666;transform:scaleX(1.0)">1</div>
<div class="t" style="left:190.56px;top:108px;font-size:8.3px;font-weight:bold;letter-spacing:-0.3px;color:#666;transform:scaleX(1.0)">2</div>
<div class="t" style="left:221.34px;top:108px;font-size:8.3px;font-weight:bold;letter-spacing:-0.3px;color:#666;transform:scaleX(1.0)">3</div>
<div class="t" style="left:251.12px;top:108px;font-size:8.3px;font-weight:bold;letter-spacing:-0.3px;color:#666;transform:scaleX(1.0)">4</div>
<div class="t" style="left:281.4px;top:108px;font-size:8.3px;font-weight:bold;letter-spacing:-0.3px;color:#666;transform:scaleX(1.0)">5</div>
<div class="t" style="left:312.18px;top:108px;font-size:8.3px;font-weight:bold;letter-spacing:-0.3px;color:#666;transform:scaleX(1.0)">6</div>
<div class="t" style="left:342.46px;top:108px;font-size:8.3px;font-weight:bold;letter-spacing:-0.3px;color:#666;transform:scaleX(1.0)">7</div>
<div class="t" style="left:372.74px;top:108px;font-size:8.3px;font-weight:bold;letter-spacing:-0.3px;color:#666;transform:scaleX(1.0)">8</div>
<div class="t" style="left:403.02px;top:108px;font-size:8.3px;font-weight:bold;letter-spacing:-0.3px;color:#666;transform:scaleX(1.0)">9</div>
<div class="t" style="left:430.8px;top:108px;font-size:8.3px;font-weight:bold;letter-spacing:-0.3px;color:#666;transform:scaleX(1.0)">10</div>
<div class="t" style="left:461.58px;top:108px;font-size:8.3px;font-weight:bold;letter-spacing:-0.3px;color:#666;transform:scaleX(1.0)">11</div>
<div class="t" style="left:491.36px;top:108px;font-size:8.3px;font-weight:bold;letter-spacing:-0.3px;color:#666;transform:scaleX(1.0)">12</div>
<div class="t" style="left:521.64px;top:108px;font-size:8.3px;font-weight:bold;letter-spacing:-0.3px;color:#666;transform:scaleX(1.0)">13</div>
<div class="t" style="left:551.92px;top:108px;font-size:8.3px;font-weight:bold;letter-spacing:-0.3px;color:#666;transform:scaleX(1.0)">14</div>
<div class="t" style="left:582.2px;top:108px;font-size:8.3px;font-weight:bold;letter-spacing:-0.3px;color:#666;transform:scaleX(1.0)">15</div>
<div class="t" style="left:612.48px;top:108px;font-size:8.3px;font-weight:bold;letter-spacing:-0.3px;color:#666;transform:scaleX(1.0)">16</div>
<div class="t" style="left:642.76px;top:108px;font-size:8.3px;font-weight:bold;letter-spacing:-0.3px;color:#666;transform:scaleX(1.0)">17</div>
<div class="t" style="left:673.04px;top:108px;font-size:8.3px;font-weight:bold;letter-spacing:-0.3px;color:#666;transform:scaleX(1.0)">18</div>
<svg class="a" style="left:0;top:0" width="1024" height="640"><polygon points="0,479.6 0,640 74.4,640" fill="#4285f4"/></svg>
</body></html>
